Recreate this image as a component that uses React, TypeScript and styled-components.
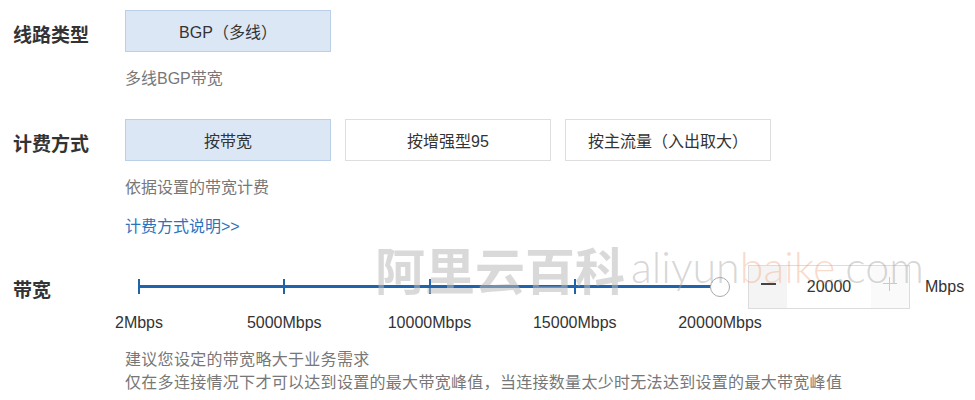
import styled, { createGlobalStyle } from 'styled-components';

const GlobalStyle = createGlobalStyle`
  body {
    margin: 0;
    background: #fff;
    font-family: 'Liberation Sans', 'Noto Sans CJK SC', sans-serif;
    color: #333;
  }
`;

const ticks = [
  { value: 2, label: '2Mbps' },
  { value: 5000, label: '5000Mbps' },
  { value: 10000, label: '10000Mbps' },
  { value: 15000, label: '15000Mbps' },
  { value: 20000, label: '20000Mbps' },
];

const MAX = 20000;

function pct(i: number) {
  return (i / (ticks.length - 1)) * 100;
}

export default function App() {
  return (
    <Page>
      <GlobalStyle />

      <Section>
        <Label>线路类型</Label>
        <Content>
          <OptionGroup>
            <Option $active>BGP（多线）</Option>
          </OptionGroup>
          <Desc>多线BGP带宽</Desc>
        </Content>
      </Section>

      <Section $mt={30}>
        <Label>计费方式</Label>
        <Content>
          <OptionGroup>
            <Option $active>按带宽</Option>
            <Option>按增强型95</Option>
            <Option>按主流量（入出取大）</Option>
          </OptionGroup>
          <Desc>依据设置的带宽计费</Desc>
          <Link>计费方式说明&gt;&gt;</Link>
        </Content>
      </Section>

      <Section $mt={28}>
        <Label>带宽</Label>
        <Content>
          <SliderRow>
            <SliderBlock>
              <TrackArea>
                <Line />
                {ticks.slice(0, -1).map((t, i) => (
                  <Tick key={t.value} style={{ left: `${pct(i)}%` }} />
                ))}
                <Handle style={{ left: `${(MAX / MAX) * 100}%` }} />
              </TrackArea>
              <TickLabels>
                {ticks.map((t, i) => (
                  <TickLabel key={t.value} style={{ left: `${pct(i)}%` }}>
                    {t.label}
                  </TickLabel>
                ))}
              </TickLabels>
            </SliderBlock>
            <NumberBox>
              <StepButton>
                <MinusGlyph />
              </StepButton>
              <NumberValue>20000</NumberValue>
              <StepButton $disabled>
                <PlusGlyph />
              </StepButton>
            </NumberBox>
            <Unit>Mbps</Unit>
          </SliderRow>
          <Hints>
            <div>建议您设定的带宽略大于业务需求</div>
            <div>仅在多连接情况下才可以达到设置的最大带宽峰值，当连接数量太少时无法达到设置的最大带宽峰值</div>
          </Hints>
        </Content>
      </Section>

      <Watermark>
        <WmCn>阿里云百科</WmCn>
        <WmEn>
          aliyun<WmAccent>baike</WmAccent>.com
        </WmEn>
      </Watermark>
    </Page>
  );
}

//****************************************************//

const Page = styled.div`
  position: relative;
  padding: 10px 0 0 13px;
  width: 975px;
  height: 400px;
  box-sizing: border-box;
  overflow: hidden;
`;

const Section = styled.section<{ $mt?: number }>`
  display: grid;
  grid-template-columns: 112px 1fr;
  margin-top: ${(p) => p.$mt ?? 0}px;
`;

const Label = styled.div`
  margin-top: 14px;
  font-size: 19px;
  line-height: 24px;
  font-weight: bold;
  color: #333;
`;

const Content = styled.div`
  display: flex;
  flex-direction: column;
`;

const OptionGroup = styled.div`
  display: flex;
  gap: 14px;
`;

const Option = styled.div<{ $active?: boolean }>`
  width: 206px;
  height: 42px;
  box-sizing: border-box;
  display: flex;
  align-items: center;
  justify-content: center;
  font-size: 16px;
  color: #333;
  background: ${(p) => (p.$active ? '#dce7f6' : '#fff')};
  border: 1px solid ${(p) => (p.$active ? '#bccfe8' : '#dedede')};
`;

const Desc = styled.div`
  margin-top: 17px;
  font-size: 16px;
  line-height: 20px;
  color: #777;
`;

const Link = styled.a`
  margin-top: 19px;
  font-size: 16px;
  line-height: 20px;
  color: #2b72bd;
  cursor: pointer;
`;

const SliderRow = styled.div`
  display: flex;
  align-items: flex-start;
`;

const SliderBlock = styled.div`
  width: 581px;
  padding: 0 10px 0 14px;
`;

const TrackArea = styled.div`
  position: relative;
  height: 44px;
`;

const Line = styled.div`
  position: absolute;
  left: 0;
  right: 0;
  top: 20px;
  height: 3px;
  background: #1f63ad;
`;

const Tick = styled.div`
  position: absolute;
  top: 14px;
  width: 2px;
  height: 15px;
  margin-left: -1px;
  background: #1f63ad;
`;

const Handle = styled.div`
  position: absolute;
  top: 12px;
  width: 20px;
  height: 20px;
  margin-left: -10px;
  box-sizing: border-box;
  border: 1px solid #aaa;
  border-radius: 50%;
  background: #fff;
`;

const TickLabels = styled.div`
  position: relative;
  height: 20px;
  margin-top: 4px;
`;

const TickLabel = styled.span`
  position: absolute;
  top: 0;
  transform: translateX(-50%);
  font-size: 16px;
  line-height: 20px;
  color: #333;
  white-space: nowrap;
`;

const NumberBox = styled.div`
  margin-left: 18px;
  width: 162px;
  height: 44px;
  box-sizing: border-box;
  border: 1px solid #dcdcdc;
  display: flex;
`;

const StepButton = styled.div<{ $disabled?: boolean }>`
  width: 38px;
  display: flex;
  align-items: center;
  justify-content: center;
  background: #f4f4f4;
  opacity: ${(p) => (p.$disabled ? 0.45 : 1)};
`;

const MinusGlyph = styled.span`
  display: block;
  width: 15px;
  height: 2px;
  margin-top: -6px;
  background: #444;
`;

const PlusGlyph = styled.span`
  position: relative;
  display: block;
  width: 14px;
  height: 14px;
  margin-top: -6px;

  &::before,
  &::after {
    content: '';
    position: absolute;
    background: #888;
  }
  &::before {
    left: 0;
    right: 0;
    top: 6px;
    height: 1px;
  }
  &::after {
    top: 0;
    bottom: 0;
    left: 6px;
    width: 1px;
  }
`;

const NumberValue = styled.div`
  flex: 1;
  display: flex;
  align-items: center;
  justify-content: center;
  font-size: 16px;
  color: #333;
`;

const Unit = styled.div`
  margin-left: 15px;
  line-height: 44px;
  font-size: 16px;
  color: #333;
`;

const Hints = styled.div`
  margin-top: 15px;
  font-size: 16px;
  line-height: 23px;
  letter-spacing: 0.3px;
  color: #777;
`;

const Watermark = styled.div`
  position: absolute;
  left: 375px;
  top: 238px;
  display: flex;
  align-items: flex-end;
  pointer-events: none;
  white-space: nowrap;
`;

const WmCn = styled.span`
  font-family: 'Noto Sans CJK SC', sans-serif;
  font-size: 50px;
  line-height: 60px;
  font-weight: bold;
  color: rgba(185, 185, 185, 0.55);
`;

const WmEn = styled.span`
  margin-left: 6px;
  margin-bottom: 9px;
  font-family: Lato, 'Liberation Sans', sans-serif;
  font-weight: 300;
  font-size: 43px;
  line-height: 44px;
  color: rgba(165, 165, 165, 0.45);
`;

const WmAccent = styled.span`
  color: rgba(240, 150, 110, 0.35);
`;
